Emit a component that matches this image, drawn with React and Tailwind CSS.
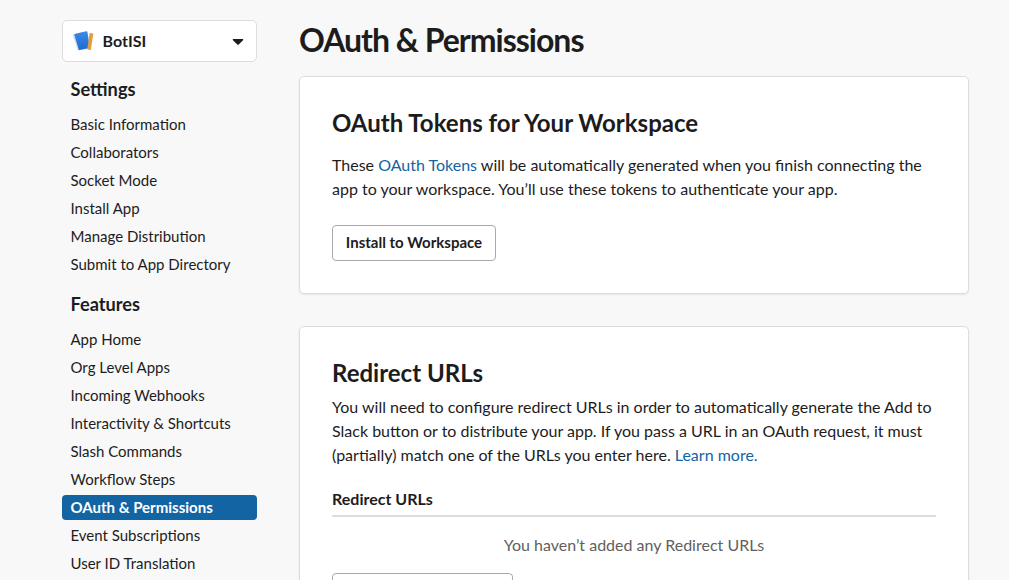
const settings = ["Basic Information", "Collaborators", "Socket Mode", "Install App", "Manage Distribution", "Submit to App Directory"];
const features = ["App Home", "Org Level Apps", "Incoming Webhooks", "Interactivity & Shortcuts", "Slash Commands", "Workflow Steps", "OAuth & Permissions", "Event Subscriptions", "User ID Translation"];

function NavSection({ title, items, active }) {
  return (
    <section className="mb-[14px]">
      <h2 className="mb-2 pl-[8.5px] text-[18.2px] leading-[25px] font-bold">{title}</h2>
      <ul>
        {items.map((item) => (
          <li key={item} className="flex h-7 items-center">
            <a className={item === active
              ? "block h-[25px] w-full rounded-[4px] bg-[#1264a3] pl-[8.5px] text-[15px] leading-[25px] font-bold whitespace-nowrap text-white"
              : "block h-[25px] w-full pl-[8.5px] text-[15px] leading-[25px] whitespace-nowrap"}>{item}</a>
          </li>
        ))}
      </ul>
    </section>
  );
}

function Card({ children, className }) {
  return <section className={"rounded-[5px] border border-[#dddddd] bg-white px-8 shadow-[0_1px_2px_rgba(0,0,0,0.08)] " + className}>{children}</section>;
}

export default function App() {
  return (
    <div className="flex h-[580px] w-[1009px] overflow-hidden bg-[#f8f8f8] pl-[62px] font-['Lato',sans-serif] text-[#1d1c1d]">
      <aside className="w-[195px] shrink-0 pt-5">
        <button className="mb-[15px] flex h-[42px] w-full items-center rounded-[5px] border border-[#dddddd] bg-white pr-3 pl-[9px] text-[16px] font-bold">
          <svg className="mr-[8.6px] h-[22px] w-[22px]" viewBox="0 0 22 22">
            <defs>
              <linearGradient id="cover" x1="0" y1="0" x2="0" y2="1">
                <stop offset="0" stopColor="#3d8ae6" />
                <stop offset="1" stopColor="#1b6bd6" />
              </linearGradient>
            </defs>
            <path d="M0.6 4.6L3.6 3.8L7.8 20.2L5.8 20.8Z" fill="#d5d8dc" />
            <path d="M3.2 3.8L14.2 1.2Q15.2 1 15.4 1.8L18 18L7.8 20Q7 20.2 6.8 19.4L2.4 5Q2.2 4.1 3.2 3.8Z" fill="url(#cover)" />
            <path d="M17.6 3L21.4 3.6L18.8 20L15.2 19.4Z" fill="#dfa03c" />
          </svg>
          <span>BotISI</span>
          <svg className="mt-[2px] ml-auto h-[6px] w-3" viewBox="0 0 12 6"><path d="M0.8 0H11.2Q11.4 1 10.8 1.4L6.7 5.4Q6 6 5.3 5.4L1.2 1.4Q0.6 1 0.8 0Z" fill="#1d1c1d" /></svg>
        </button>
        <NavSection title="Settings" items={settings} />
        <NavSection title="Features" items={features} active="OAuth & Permissions" />
      </aside>
      <main className="ml-[42px] w-[670px] shrink-0 pt-[19px]">
        <h1 className="mb-[15px] text-[32px] leading-[42px] font-bold tracking-[-1px]">OAuth & Permissions</h1>
        <Card className="mb-8 h-[218px] pt-[30px]">
          <h2 className="mb-[14px] text-[24px] leading-8 font-bold">OAuth Tokens for Your Workspace</h2>
          <p className="text-[16px] leading-6 whitespace-nowrap">These <a className="text-[#1264a3]">OAuth Tokens</a> will be automatically generated when you finish connecting the<br />app to your workspace. You’ll use these tokens to authenticate your app.</p>
          <button className="mt-6 h-9 w-[164px] rounded-[4px] border border-[#a9a9a9] pb-[2px] text-[15px] font-bold">Install to Workspace</button>
        </Card>
        <Card className="h-[400px] pt-[30px]">
          <h2 className="mb-[6px] text-[24px] leading-8 font-bold">Redirect URLs</h2>
          <p className="text-[16px] leading-6 whitespace-nowrap">You will need to configure redirect URLs in order to automatically generate the Add to<br />Slack button or to distribute your app. If you pass a URL in an OAuth request, it must<br />(partially) match one of the URLs you enter here. <a className="text-[#1264a3]">Learn more.</a></p>
          <h3 className="mt-5 h-[30px] border-b-2 border-[#dddddd] text-[16px] leading-6 font-bold">Redirect URLs</h3>
          <p className="mt-4 text-center text-[16px] leading-6 text-[#616061]">You haven’t added any Redirect URLs</p>
          <button className="mt-4 block h-9 w-[181px] rounded-[4px] border border-[#a9a9a9]" />
        </Card>
      </main>
    </div>
  );
}
